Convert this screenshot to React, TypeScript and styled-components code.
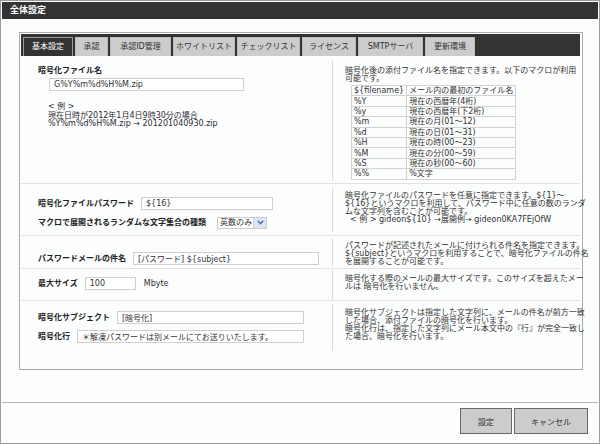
import React from "react";
import styled, { createGlobalStyle } from "styled-components";

const GlobalStyle = createGlobalStyle`
  html, body {
    margin: 0;
    padding: 0;
    background: #fcfdfd;
  }
  body {
    font-family: "DejaVu Sans", "Noto Sans CJK JP", sans-serif;
    font-size: 8px;
    color: #333;
  }
  * { box-sizing: border-box; }
`;

const Window = styled.div`
  width: 600px;
  height: 444px;
  border: 1px solid #9a9a9a;
  padding: 1px;
  background: #fcfdfd;
  display: flex;
  flex-direction: column;
`;

const TitleBar = styled.div`
  height: 17px;
  background: #333;
  color: #fff;
  font-weight: bold;
  font-size: 9px;
  line-height: 17px;
  padding-left: 8px;
`;

const Panel = styled.div`
  margin: 13px 0 0 17px;
  width: 564px;
  height: 338px;
  border: 1px solid #aaa;
  padding: 1px 2px 1px 1px;
  display: flex;
  flex-direction: column;
`;

const TabBar = styled.div`
  height: 22px;
  background: #333;
  display: flex;
  align-items: flex-end;
  gap: 2px;
  padding-left: 2px;
`;

const Tab = styled.div<{ $w: number; $active?: boolean }>`
  width: ${(p) => p.$w}px;
  height: 19px;
  line-height: 17px;
  text-align: center;
  font-size: 8px;
  white-space: nowrap;
  background: ${(p) => (p.$active ? "#333" : "#cccccc")};
  color: ${(p) => (p.$active ? "#fff" : "#333")};
  border: 1px solid ${(p) => (p.$active ? "#9a9a9a" : "#bdbdbd")};
  border-bottom: none;
`;

const Rows = styled.div`
  flex: 1;
  display: flex;
  flex-direction: column;
`;

const Row = styled.div<{ $h?: number; $last?: boolean }>`
  display: grid;
  grid-template-columns: 311px 1fr;
  ${(p) => (p.$h ? `height: ${p.$h}px;` : "flex: 1;")}
  border-bottom: ${(p) => (p.$last ? "none" : "1px solid #e2e2e2")};
`;

const LeftCell = styled.div<{ $pt: number }>`
  padding: ${(p) => p.$pt}px 0 0 17px;
`;

const Label = styled.span`
  font-weight: bold;
  color: #222;
  line-height: 10px;
  white-space: nowrap;
`;

const FieldLine = styled.div<{ $gap?: number }>`
  display: flex;
  align-items: center;
  gap: 7px;
  height: 13px;
  margin-top: ${(p) => p.$gap ?? 0}px;
`;

const TextBox = styled.input<{ $w: number; $indent?: number }>`
  width: ${(p) => p.$w}px;
  height: 13px;
  margin: 0 0 0 ${(p) => p.$indent ?? 0}px;
  border: 1px solid #cfcfcf;
  background: #fff;
  padding: 0 4px;
  font-family: "DejaVu Sans", "Noto Sans CJK JP", sans-serif;
  font-size: 8px;
  color: #333;
  outline: none;
`;

const Example = styled.div`
  margin: 12px 0 0 10px;
  line-height: 8.5px;
  white-space: nowrap;
  color: #2c2c34;
`;

const Unit = styled.span`
  margin-left: 1px;
`;

const Select = styled.div`
  width: 50px;
  height: 12px;
  margin-left: 4px;
  border: 1px solid #cfcfcf;
  background: #fff;
  display: flex;
  align-items: stretch;
  line-height: 10px;
  white-space: nowrap;
`;

const SelectText = styled.span`
  flex: 1;
  padding-left: 2px;
  overflow: hidden;
`;

const SelectArrow = styled.span`
  width: 13px;
  flex: none;
  background: #dde5f1;
  border-left: 1px solid #c3cfe2;
  display: flex;
  align-items: center;
  justify-content: center;
`;

const RightCell = styled.div<{ $top?: number }>`
  padding-top: ${(p) => p.$top ?? 3}px;
  display: flex;
  align-items: flex-start;
`;

const Desc = styled.div<{ $pt?: number; $pb?: number }>`
  flex: 1;
  border-left: 1px solid #dcdcdc;
  padding: ${(p) => p.$pt ?? 5}px 0 ${(p) => p.$pb ?? 8}px 12px;
  line-height: 8px;
  white-space: nowrap;
  color: #333;
`;

const DescExample = styled.div`
  padding-left: 5px;
`;

const MacroTable = styled.table`
  margin: 2px 0 0 6px;
  border-collapse: collapse;
  td {
    border: 1px solid #d2d2d2;
    height: 10.4px;
    padding: 0 2px;
    line-height: 9px;
  }
  td:first-child {
    width: 54px;
  }
  td:last-child {
    width: 103px;
  }
`;

const Footer = styled.div`
  margin-top: 32px;
  border-top: 1px solid #b4b4b4;
  display: flex;
  justify-content: flex-end;
  gap: 2px;
  padding: 5px 10px 0 0;
`;

const Button = styled.button<{ $w: number }>`
  width: ${(p) => p.$w}px;
  height: 26px;
  background: #cccccc;
  border: 1px solid #6a6a6a;
  font-family: "DejaVu Sans", "Noto Sans CJK JP", sans-serif;
  font-size: 8px;
  color: #333;
  padding: 0;
`;

const tabs = [
  { label: "基本設定", w: 50, active: true },
  { label: "承認", w: 33 },
  { label: "承認ID管理", w: 61 },
  { label: "ホワイトリスト", w: 62 },
  { label: "チェックリスト", w: 63 },
  { label: "ライセンス", w: 54 },
  { label: "SMTPサーバ", w: 65 },
  { label: "更新環境", w: 50 },
];

const macros = [
  ["${filename}", "メール内の最初のファイル名"],
  ["%Y", "現在の西暦年(4桁)"],
  ["%y", "現在の西暦年(下2桁)"],
  ["%m", "現在の月(01～12)"],
  ["%d", "現在の日(01～31)"],
  ["%H", "現在の時(00～23)"],
  ["%M", "現在の分(00～59)"],
  ["%S", "現在の秒(00～60)"],
  ["%%", "%文字"],
];

function Chevron() {
  return (
    <svg width="7" height="5" viewBox="0 0 7 5">
      <path d="M0.8 0.8 L3.5 3.8 L6.2 0.8" fill="none" stroke="#3f6fc4" strokeWidth="1.4" />
    </svg>
  );
}

export default function App() {
  return (
    <>
      <GlobalStyle />
      <Window>
        <TitleBar>全体設定</TitleBar>
        <Panel>
          <TabBar>
            {tabs.map((t) => (
              <Tab key={t.label} $w={t.w} $active={t.active}>
                {t.label}
              </Tab>
            ))}
          </TabBar>
          <Rows>
            <Row $h={128}>
              <LeftCell $pt={10}>
                <Label>暗号化ファイル名</Label>
                <div style={{ marginTop: 2 }}>
                  <TextBox $w={195} $indent={11} readOnly value="G%Y%m%d%H%M.zip" />
                </div>
                <Example>
                  &lt; 例 &gt;
                  <br />
                  現在日時が2012年1月4日9時30分の場合
                  <br />
                  %Y%m%d%H%M.zip → 201201040930.zip
                </Example>
              </LeftCell>
              <RightCell $top={4}>
                <Desc $pt={7} $pb={1}>
                  暗号化後の添付ファイル名を指定できます。以下のマクロが利用
                  <br />
                  可能です。
                  <MacroTable>
                    <tbody>
                      {macros.map(([k, v]) => (
                        <tr key={k}>
                          <td>{k}</td>
                          <td>{v}</td>
                        </tr>
                      ))}
                    </tbody>
                  </MacroTable>
                </Desc>
              </RightCell>
            </Row>

            <Row $h={52}>
              <LeftCell $pt={13}>
                <FieldLine>
                  <Label>暗号化ファイルパスワード</Label>
                  <TextBox $w={132} readOnly value="${16}" />
                </FieldLine>
                <FieldLine $gap={6}>
                  <Label>マクロで展開されるランダムな文字集合の種類</Label>
                  <Select>
                    <SelectText>英数のみ</SelectText>
                    <SelectArrow>
                      <Chevron />
                    </SelectArrow>
                  </Select>
                </FieldLine>
              </LeftCell>
              <RightCell>
                <Desc>
                  暗号化ファイルのパスワードを任意に指定できます。${"{1}"}～
                  <br />
                  ${"{16}"}というマクロを利用して、パスワード中に任意の数のランダ
                  <br />
                  ムな文字列を含むことが可能です。
                  <DescExample>&lt; 例 &gt; gideon${"{10}"} →展開例→ gideon0KA7FEjOfW</DescExample>
                </Desc>
              </RightCell>
            </Row>

            <Row $h={33}>
              <LeftCell $pt={16}>
                <FieldLine>
                  <Label>パスワードメールの件名</Label>
                  <TextBox $w={186} readOnly value="[パスワード] ${subject}" />
                </FieldLine>
              </LeftCell>
              <RightCell $top={2}>
                <Desc $pt={4} $pb={0}>
                  パスワードが記述されたメールに付けられる件名を指定できます。
                  <br />
                  ${"{subject}"}というマクロを利用することで、暗号化ファイルの件名
                  <br />
                  を展開することが可能です。
                </Desc>
              </RightCell>
            </Row>

            <Row $h={32}>
              <LeftCell $pt={8}>
                <FieldLine>
                  <Label>最大サイズ</Label>
                  <TextBox $w={51} readOnly value="100" />
                  <Unit>Mbyte</Unit>
                </FieldLine>
              </LeftCell>
              <RightCell $top={1}>
                <Desc $pt={5} $pb={10}>
                  暗号化する際のメールの最大サイズです。このサイズを超えたメー
                  <br />
                  ルは 暗号化を行いません。
                </Desc>
              </RightCell>
            </Row>

            <Row $last>
              <LeftCell $pt={10}>
                <FieldLine>
                  <Label>暗号化サブジェクト</Label>
                  <TextBox $w={187} readOnly value="[暗号化]" />
                </FieldLine>
                <FieldLine $gap={6}>
                  <Label>暗号化行</Label>
                  <TextBox $w={227} readOnly value="＊解凍パスワードは別メールにてお送りいたします。" />
                </FieldLine>
              </LeftCell>
              <RightCell>
                <Desc $pt={5} $pb={9}>
                  暗号化サブジェクトは指定した文字列に、メールの件名が前方一致
                  <br />
                  した場合、添付ファイルの暗号化を行います。
                  <br />
                  暗号化行は、指定した文字列にメール本文中の『行』が完全一致し
                  <br />
                  た場合、暗号化を行います。
                </Desc>
              </RightCell>
            </Row>
          </Rows>
        </Panel>
        <Footer>
          <Button $w={52}>設定</Button>
          <Button $w={74}>キャンセル</Button>
        </Footer>
      </Window>
    </>
  );
}
